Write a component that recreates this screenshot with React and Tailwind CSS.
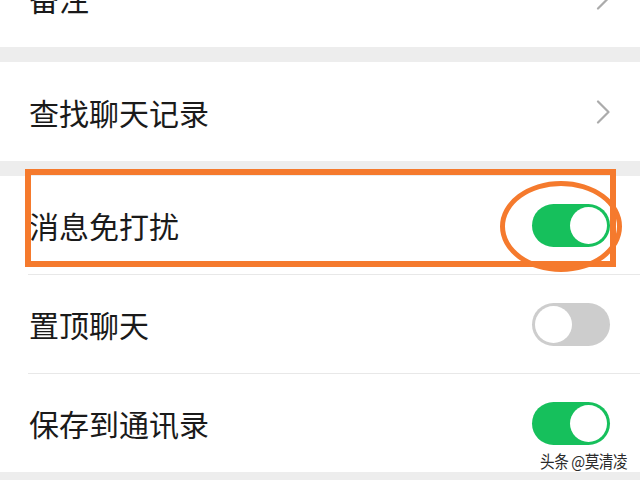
import React from 'react';

// --- CHEVRON ---
const Chevron = () => (
    <svg width="14" height="24" viewBox="0 0 14 24" fill="none">
        <polyline points="2,1.5 12.5,12 2,22.5" stroke="#ababab" strokeWidth="2.2" strokeLinecap="round" strokeLinejoin="round" />
    </svg>
);

// --- TOGGLE ---
const Toggle = ({ on }) => (
    <div
        className={
            on
                ? 'flex w-[78px] h-[43px] items-center justify-end rounded-full bg-[#16c05c] p-[3px]'
                : 'flex w-[78px] h-[43px] items-center justify-start rounded-full bg-[#cdcdcd] p-[3px]'
        }
    >
        <div className="w-[37px] h-[37px] rounded-full bg-white" />
    </div>
);

// --- ROW ---
const Row = ({ label, chevron, toggle, on, height = 'h-[99px]' }) => (
    <div className={`${height} flex items-center justify-between pl-[29px] pr-[30px]`}>
        <span className="text-[30px] leading-none text-[#1a1a1a]">{label}</span>
        {chevron && <Chevron />}
        {toggle && <Toggle on={on} />}
    </div>
);

const Divider = () => <div className="ml-[28px] h-px bg-[#e8e8e8]" />;

export default function App() {
    return (
        <div className="relative w-[640px] h-[480px] overflow-hidden bg-[#ededed] font-['Noto_Sans_CJK_SC',sans-serif]">
            <div className="-mt-[52px] bg-white">
                <Row label="备注" chevron />
            </div>
            <div className="h-[15px]" />
            <div className="bg-white">
                <Row label="查找聊天记录" chevron />
            </div>
            <div className="h-[15px]" />
            <div className="bg-white">
                <Row label="消息免打扰" toggle on height="h-[98px]" />
                <Divider />
                <Row label="置顶聊天" toggle on={false} height="h-[98px]" />
                <Divider />
                <Row label="保存到通讯录" toggle on height="h-[98px]" />
            </div>

            {/* annotations */}
            <div className="absolute left-[25px] top-[169px] w-[591px] h-[98px] border-[6px] border-[#f57a2d]" />
            <div className="absolute left-[500px] top-[181px] w-[122px] h-[91px] rounded-[50%] border-[5px] border-[#f57a2d]" />

            {/* watermark */}
            <div className="absolute left-[540px] top-[452px] origin-left scale-x-[0.86] whitespace-nowrap text-[17px] leading-none tracking-[-0.5px] text-[#2a2a2a] [text-shadow:0_0_2px_#fff]">
                头条 @莫清凌
            </div>
        </div>
    );
}
